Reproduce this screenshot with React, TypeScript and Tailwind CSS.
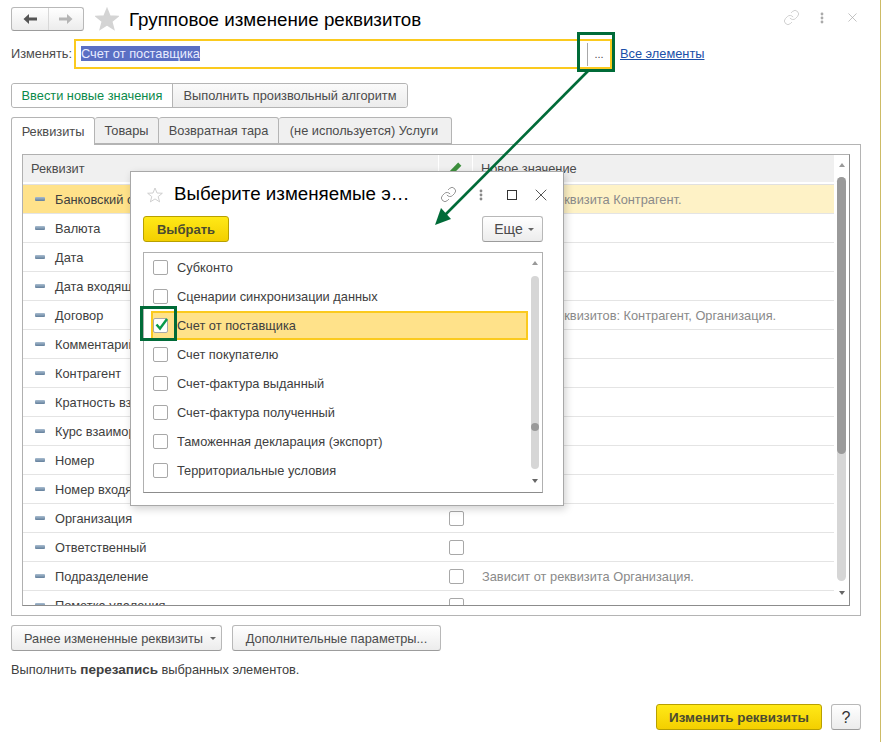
import React from "react";
import { Link, X } from "lucide-react";

const rows: [string, string][] = [
  ["Банковский счет", "Зависит от реквизита Контрагент."],
  ["Валюта", ""],
  ["Дата", ""],
  ["Дата входящего документа", ""],
  ["Договор", "Зависит от реквизитов: Контрагент, Организация."],
  ["Комментарий", ""],
  ["Контрагент", ""],
  ["Кратность взаиморасчетов", ""],
  ["Курс взаиморасчетов", ""],
  ["Номер", ""],
  ["Номер входящего документа", ""],
  ["Организация", ""],
  ["Ответственный", ""],
  ["Подразделение", "Зависит от реквизита Организация."],
  ["Пометка удаления", ""],
];

const items = [
  "Субконто",
  "Сценарии синхронизации данных",
  "Счет от поставщика",
  "Счет покупателю",
  "Счет-фактура выданный",
  "Счет-фактура полученный",
  "Таможенная декларация (экспорт)",
  "Территориальные условия",
];

function Box({ checked = false }: { checked?: boolean }) {
  return (
    <span className="relative block w-[15px] h-[15px] shrink-0 rounded-[2px] border border-[#a8a8a8] bg-white">
      {checked && (
        <svg className="absolute left-[0px] top-[-3px]" width="16" height="16" viewBox="0 0 16 16">
          <path d="M2.5 8.5 L6 12.5 L13 3" fill="none" stroke="#0a9a4a" strokeWidth="2.4" />
        </svg>
      )}
    </span>
  );
}

function Star({ size, filled }: { size: number; filled: boolean }) {
  return (
    <svg width={size} height={size} viewBox="0 0 24 24" className="shrink-0">
      <path
        d="M12 1.5 L15 9 L23 9.4 L16.8 14.4 L18.9 22.3 L12 17.9 L5.1 22.3 L7.2 14.4 L1 9.4 L9 9 Z"
        fill={filled ? "#d4d4d4" : "#ffffff"}
        stroke={filled ? "#d4d4d4" : "#c8c8c8"}
        strokeWidth="1.3"
      />
    </svg>
  );
}

function Dots({ color }: { color: string }) {
  return (
    <svg width="4" height="12" viewBox="0 0 4 12" className="block">
      <circle cx="2" cy="2" r="1.4" fill={color} />
      <circle cx="2" cy="6" r="1.4" fill={color} />
      <circle cx="2" cy="10" r="1.4" fill={color} />
    </svg>
  );
}

function Caret() {
  return <span className="inline-block w-0 h-0 border-x-[3px] border-x-transparent border-t-[3px] border-t-[#666]" />;
}

function Btn({ className = "", children }: { className?: string; children: React.ReactNode }) {
  return (
    <div className={"flex items-center justify-center h-[26px] rounded-[3px] border border-[#b8b8b8] border-b-[#9c9c9c] bg-gradient-to-b from-white to-[#ececec] text-[#4b4b4b] " + className}>
      {children}
    </div>
  );
}

function YellowBtn({ className = "", children }: { className?: string; children: React.ReactNode }) {
  return (
    <div className={"flex items-center justify-center h-[26px] rounded-[3px] border border-[#b8a000] bg-gradient-to-b from-[#ffe916] to-[#f3cf00] font-bold text-[#4b4b30] " + className}>
      {children}
    </div>
  );
}

function ScrollBar({ className = "", bottomGap, thumb }: { className?: string; bottomGap: string; thumb: React.ReactNode }) {
  return (
    <div className={"flex flex-col items-center " + className}>
      <span className="mt-[8px] w-0 h-0 border-x-[3px] border-x-transparent border-b-[4px] border-b-[#999]" />
      {thumb}
      <span className={"w-0 h-0 border-x-[3px] border-x-transparent border-t-[4px] border-t-[#666] " + bottomGap} />
    </div>
  );
}

function RowBar() {
  return <span className="block w-[10px] h-[4px] rounded-[1px] bg-gradient-to-b from-[#a9bdd0] to-[#64809c] shrink-0" />;
}

export default function App() {
  return (
    <div className="relative w-[881px] h-[742px] overflow-hidden bg-white border-r border-r-[#cdbb66] text-[12.8px] leading-[15px] text-[#4b4b4b]" style={{ fontFamily: '"Liberation Sans", Arial, sans-serif' }}>
      <div className="flex flex-col px-[11px] h-full w-[850px] box-content">
        {/* Header */}
        <div className="flex items-center h-[24px] mt-[7px]">
          <div className="flex h-[24px] w-[73px] rounded-[3px] border border-[#b8b8b8] border-b-[#9c9c9c] bg-gradient-to-b from-white to-[#ececec]">
            <div className="flex items-center justify-center w-[37px] border-r border-r-[#d8d8d8]">
              <svg width="14" height="10" viewBox="0 0 14 10"><path d="M6 0 L0.5 5 L6 10 L6 6.5 L14 6.5 L14 3.5 L6 3.5 Z" fill="#555" /></svg>
            </div>
            <div className="flex items-center justify-center flex-1">
              <svg width="14" height="10" viewBox="0 0 14 10"><path d="M8 0 L13.5 5 L8 10 L8 6.5 L0 6.5 L0 3.5 L8 3.5 Z" fill="#b5b5b5" /></svg>
            </div>
          </div>
          <div className="ml-[11px]"><Star size={24} filled /></div>
          <div className="ml-[10px] pt-[2px] text-[18.75px] leading-[24px] text-black whitespace-nowrap">Групповое изменение реквизитов</div>
          <div className="ml-auto flex items-center mr-[1px] mt-[-3px]">
            <Link size={17} strokeWidth={1.1} className="text-[#c4c4c4]" />
            <span className="ml-[20px]"><Dots color="#aaaaaa" /></span>
            <X size={15} strokeWidth={1.1} className="ml-[21px] text-[#a8a8a8]" />
          </div>
        </div>

        {/* Field */}
        <div className="flex items-center mt-[8px] h-[30px]">
          <span className="w-[63px] mb-[2px] whitespace-nowrap">Изменять:</span>
          <div className="flex items-center w-[538px] h-[30px] border-2 border-[#fbca1e] pl-[5px]">
            <span className="bg-[#5a6fc4] mb-[2px] text-[#e8ecff] whitespace-nowrap">Счет от поставщика</span>
            <div className="ml-auto flex items-center justify-center w-[23px] h-[23px] border-l border-l-[#a8a8a8] text-[11px]">...</div>
          </div>
          <span className="ml-[8px] mb-[2px] text-[#1a4fa8] underline whitespace-nowrap">Все элементы</span>
        </div>

        {/* Mode buttons */}
        <div className="flex mt-[14px] h-[25px] w-[397px] rounded-[3px] border border-[#b4b4b4]">
          <div className="flex items-center justify-center w-[161px] bg-white text-[#0a8a4a] border-r border-r-[#b4b4b4] rounded-l-[3px]">Ввести новые значения</div>
          <div className="flex items-center justify-center flex-1 bg-gradient-to-b from-[#fafafa] to-[#ececec] rounded-r-[3px]">Выполнить произвольный алгоритм</div>
        </div>

        {/* Tabs */}
        <div className="relative flex mt-[9px] h-[28px] z-10">
          <div className="flex items-center justify-center w-[84px] h-[28px] bg-white border border-[#b4b4b4] border-b-0 rounded-t-[3px]">Реквизиты</div>
          <div className="flex items-center justify-center w-[64px] h-[27px] bg-[#f0f0f0] border border-l-0 border-[#b4b4b4] rounded-t-[3px]">Товары</div>
          <div className="flex items-center justify-center w-[120px] h-[27px] bg-[#f0f0f0] border border-l-0 border-[#b4b4b4] rounded-t-[3px]">Возвратная тара</div>
          <div className="flex items-center justify-center w-[173px] h-[27px] pr-[2px] bg-[#f0f0f0] border border-l-0 border-[#b4b4b4] rounded-t-[3px]">(не используется) Услуги</div>
        </div>

        {/* Panel */}
        <div className="mt-[-1px] h-[472px] border border-[#b4b4b4] pt-[9px] px-[10px]">
          <div className="flex h-[452px] w-[828px] border border-[#b0b0b0] border-b-[#8c8c8c] border-r-[#8c8c8c] overflow-hidden">
            <div className="w-[811px] shrink-0 overflow-hidden">
              <div className="flex h-[28px] bg-[#f0f0f0] border-b border-b-white">
                <div className="flex items-center w-[416px] pl-[8px] border-r border-r-white">Реквизит</div>
                <div className="flex justify-center pt-[6px] w-[34px] border-r border-r-white">
                  <svg width="15" height="15" viewBox="0 0 14 14">
                    <path d="M1 13 L2 9 L9.5 1.5 L12.5 4.5 L5 12 Z" fill="#3d8f3d" />
                    <path d="M1 13 L2 9 L5 12 Z" fill="#e8b060" />
                  </svg>
                </div>
                <div className="flex items-center pl-[8px] flex-1">Новое значение</div>
              </div>
              <div className="h-[2px] border-b border-b-[#e0e0e0]" />
              {rows.map(([name, value], i) => (
                <div key={name} className={"flex items-center h-[29px] border-b border-b-[#e4e4e4] " + (i === 0 ? "bg-[#fef2c6]" : "")}>
                  <div className={"flex items-center self-stretch w-[416px] pl-[12px] gap-[10px] " + (i === 0 ? "bg-[#ffe28a]" : "")}>
                    <RowBar />
                    <span className="text-[#404040]">{name}</span>
                  </div>
                  <div className="flex justify-center w-[34px]"><Box /></div>
                  <div className="pl-[9px] text-[#8a8a8a] whitespace-nowrap">{value}</div>
                </div>
              ))}
            </div>
            <ScrollBar
              className="w-[15px] h-full"
              bottomGap="mb-[10px]"
              thumb={
                <div className="mt-[10px] mb-[10px] w-[9px] flex-1 rounded-[5px] bg-[#d6d6d6]">
                  <div className="h-[277px] rounded-[5px] bg-[#9a9a9a]" />
                </div>
              }
            />
          </div>
        </div>

        {/* Footer buttons */}
        <div className="flex gap-[10px] mt-[9px]">
          <Btn className="w-[211px] gap-[7px] pl-[7px]">Ранее измененные реквизиты <Caret /></Btn>
          <Btn className="w-[209px]">Дополнительные параметры...</Btn>
        </div>
        <div className="mt-[11px] text-[#404040]">Выполнить <b className="text-[13.5px]">перезапись</b> выбранных элементов.</div>
        <div className="flex justify-end gap-[9px] mt-[27px]">
          <YellowBtn className="w-[166px] text-[13.4px]">Изменить реквизиты</YellowBtn>
          <Btn className="w-[30px] text-[16px] text-[#333]">?</Btn>
        </div>
      </div>

      {/* Dialog */}
      <div className="absolute left-[130px] top-[171px] w-[434px] h-[335px] bg-white border border-[#a8a8a8] shadow-[2px_3px_8px_rgba(0,0,0,0.18)] flex flex-col px-[12px] text-[#404040]">
        <div className="flex items-center h-[43px] mt-[1px]">
          <span className="ml-[4px]"><Star size={16} filled={false} /></span>
          <span className="ml-[11px] mb-[2px] w-[241px] shrink-0 text-[18.75px] leading-[24px] text-black whitespace-nowrap overflow-hidden">Выберите изменяемые э…</span>
          <Link size={17} strokeWidth={1.1} className="ml-[25px] text-[#777] shrink-0" />
          <span className="ml-[22px]"><Dots color="#888888" /></span>
          <span className="ml-[24px] block w-[10px] h-[10px] border border-[#333] shrink-0" />
          <X size={20} strokeWidth={1} className="ml-[14px] text-[#333] shrink-0" />
        </div>
        <div className="flex justify-between w-[400px]">
          <YellowBtn className="w-[86px] text-[13px]">Выбрать</YellowBtn>
          <Btn className="w-[61px] gap-[5px]"><span className="text-[14px] ml-[3px]">Еще</span> <Caret /></Btn>
        </div>
        <div className="flex mt-[10px] h-[241px] w-[400px] border border-[#b0b0b0] border-b-[#8c8c8c]">
          <div className="w-[384px] shrink-0 pl-[7px]">
            {items.map((t, i) => (
              <div key={t} className={"flex items-center h-[29px] gap-[9px] " + (i === 2 ? "border-2 border-[#fbca1e] bg-[#ffe28a]" : "")}>
                <span className={i === 2 ? "" : "ml-[2px]"}><Box checked={i === 2} /></span>
                <span>{t}</span>
              </div>
            ))}
          </div>
          <ScrollBar
            className="w-[14px] h-full"
            bottomGap="mb-[9px]"
            thumb={
              <div className="relative mt-[11px] mb-[10px] w-[8px] flex-1 rounded-[4px] bg-[#d6d6d6]">
                <span className="absolute left-0 top-[147px] w-[8px] h-[8px] rounded-full bg-[#9a9a9a]" />
              </div>
            }
          />
        </div>
      </div>

      {/* Annotation */}
      <div className="absolute left-[577px] top-[32px] w-[38px] h-[40px] border-[3px] border-[#006b38]" />
      <div className="absolute left-[140px] top-[306px] w-[37px] h-[35px] border-[3px] border-[#006b38]" />
      <svg className="absolute left-0 top-0 pointer-events-none" width="881" height="742">
        <line x1="588" y1="71" x2="445" y2="215" stroke="#006b38" strokeWidth="2.6" />
        <path d="M435 225 L441 208 L451 219 Z" fill="#006b38" />
      </svg>
    </div>
  );
}
